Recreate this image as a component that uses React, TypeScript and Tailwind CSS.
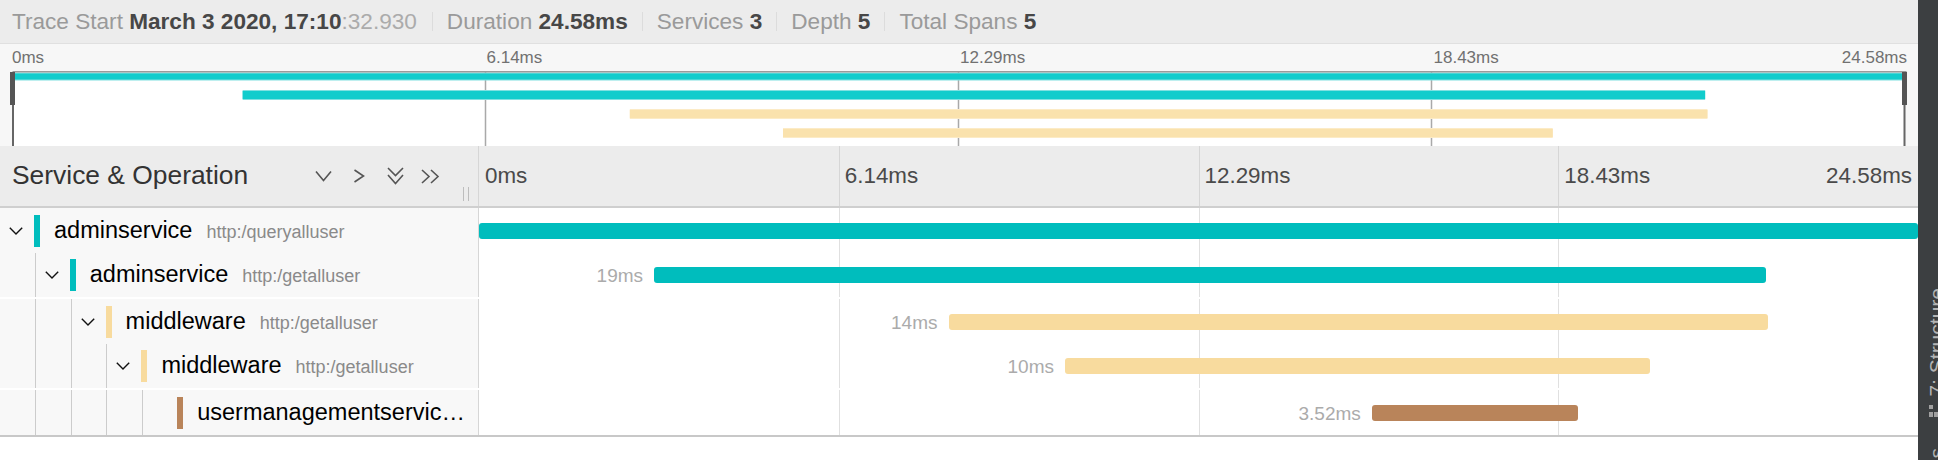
import React from 'react';

const TOTAL = 24.58;

type Span = {
  service: string;
  op?: string;
  depth: number;
  start: number;
  dur: number;
  color: 'teal' | 'tan' | 'brown';
  label?: string;
  hasChildren: boolean;
};

const spans: Span[] = [
  { service: 'adminservice', op: 'http:/queryalluser', depth: 0, start: 0, dur: 24.58, color: 'teal', hasChildren: true },
  { service: 'adminservice', op: 'http:/getalluser', depth: 1, start: 2.99, dur: 19, color: 'teal', label: '19ms', hasChildren: true },
  { service: 'middleware', op: 'http:/getalluser', depth: 2, start: 8.02, dur: 14, color: 'tan', label: '14ms', hasChildren: true },
  { service: 'middleware', op: 'http:/getalluser', depth: 3, start: 10.01, dur: 10, color: 'tan', label: '10ms', hasChildren: true },
  { service: 'usermanagementservic…', depth: 4, start: 15.25, dur: 3.52, color: 'brown', label: '3.52ms', hasChildren: false },
];

const barColor: Record<Span['color'], string> = {
  teal: 'bg-[#00bdbd]',
  tan: 'bg-[#f8db9e]',
  brown: 'bg-[#b9845a]',
};

function HeaderItem({ label, value, first }: { label: string; value: React.ReactNode; first?: boolean }) {
  return (
    <div className={first ? 'pl-[12px] pr-[15px]' : 'px-[14px]'}>
      <span className="text-[#9a9a9a]">{label} </span>
      {value}
    </div>
  );
}

function Divider() {
  return <div className="h-[19px] w-px shrink-0 bg-[#dcdcdc]" />;
}

function Minimap() {
  const W = 1892;
  const ox = 2.5;
  const pxPerMs = W / TOTAL;
  const bars = [
    { s: 0, d: 24.58, y: 1.5, h: 8, c: 'teal' },
    { s: 2.99, d: 19, y: 19, h: 10, c: 'teal' },
    { s: 8.02, d: 14, y: 38, h: 10, c: 'tan' },
    { s: 10.01, d: 10, y: 57, h: 10, c: 'tan' },
  ];
  return (
    <div className="bg-[#f7f7f7]">
      <div className="grid h-[27px] grid-cols-4 items-center px-[12px] pt-[1px] text-[17px] text-[#717171]">
        <div>0ms</div>
        <div className="pl-[1px]">6.14ms</div>
        <div className="pl-[1px]">12.29ms</div>
        <div className="flex justify-between pl-[1px]">
          <span>18.43ms</span>
          <span className="-mr-[1px]">24.58ms</span>
        </div>
      </div>
      <div className="h-[75px] pl-[10px]">
        <svg width="1898" height="75" viewBox="0 0 1898 75">
          <rect x={ox} y={0} width={W} height={75} fill="#ffffff" />
          {[1, 2, 3].map((k) => (
            <rect key={k} x={ox + (W / 4) * k - 0.75} y={0} width={1.5} height={75} fill="#a9a9a9" />
          ))}
          {bars.map((b, i) => (
            <g key={i}>
              <rect x={ox + b.s * pxPerMs} y={b.y} width={b.d * pxPerMs} height={b.h} fill={b.c === 'teal' ? '#7fe0e0' : '#fcebc6'} />
              <rect x={ox + b.s * pxPerMs} y={b.y + 1} width={b.d * pxPerMs} height={b.h - 2} fill={b.c === 'teal' ? '#11cccc' : '#fae2ad'} />
            </g>
          ))}
          <rect x={ox} y={0} width={W + 2} height={1.5} fill="#9a9a9a" />
          <rect x={0} y={1} width={5} height={33} fill="#555555" />
          <rect x={2} y={34} width={2} height={41} fill="#666666" />
          <rect x={1892} y={1} width={5} height={33} fill="#555555" />
          <rect x={1893.5} y={34} width={2} height={41} fill="#666666" />
        </svg>
      </div>
    </div>
  );
}

function ChevDown({ className }: { className?: string }) {
  return (
    <svg width="17" height="12" viewBox="0 0 17 12" className={className}>
      <path d="M1 1.5 L8.5 10.5 L16 1.5" fill="none" stroke="#555" strokeWidth="1.6" />
    </svg>
  );
}

function RowChevron() {
  return (
    <svg width="14" height="8" viewBox="0 0 14 8">
      <path d="M0.8 0.8 L7 7 L13.2 0.8" fill="none" stroke="#111" strokeWidth="1.4" />
    </svg>
  );
}

function TableHeader() {
  return (
    <div className="flex h-[62px] border-b-2 border-[#cfcfcf] bg-[#ececec]">
      <div className="flex w-[479px] shrink-0 items-center border-r border-[#d6d6d6] pl-[12px] pr-[9px]">
        <div className="flex-1 text-[26.4px] text-[#333333]">Service &amp; Operation</div>
        <div className="flex items-center">
          <ChevDown />
          <svg width="12" height="14" viewBox="0 0 12 14" className="ml-[21px]">
            <path d="M1.5 1 L10.5 7 L1.5 13" fill="none" stroke="#555" strokeWidth="1.6" />
          </svg>
          <svg width="17" height="18" viewBox="0 0 17 18" className="ml-[22px]">
            <path d="M1 1 L8.5 8.5 L16 1" fill="none" stroke="#555" strokeWidth="1.6" />
            <path d="M1 8 L8.5 16.5 L16 8" fill="none" stroke="#555" strokeWidth="1.6" />
          </svg>
          <svg width="19" height="15" viewBox="0 0 19 15" className="ml-[17px]">
            <path d="M1 1 L8 7.5 L1 14" fill="none" stroke="#555" strokeWidth="1.6" />
            <path d="M10 1 L17 7.5 L10 14" fill="none" stroke="#555" strokeWidth="1.6" />
          </svg>
        </div>
        <div className="mb-[5px] ml-[23px] h-[14px] w-[6px] self-end border-x border-[#bdbdbd]" />
      </div>
      <div className="grid flex-1 grid-cols-4 text-[22.4px] text-[#4a4a4a]">
        <div className="flex items-center pl-[6px]">0ms</div>
        <div className="flex items-center border-l border-[#d6d6d6] pl-[5px]">6.14ms</div>
        <div className="flex items-center border-l border-[#d6d6d6] pl-[5px]">12.29ms</div>
        <div className="flex items-center justify-between border-l border-[#d6d6d6] pl-[5px] pr-[6px]">
          <span>18.43ms</span>
          <span>24.58ms</span>
        </div>
      </div>
    </div>
  );
}

function Row({ span, index }: { span: Span; index: number }) {
  const indents = Array.from({ length: span.depth });
  return (
    <div className={index % 2 === 1 ? 'flex h-[46px] border-b-2 border-white' : 'flex h-[45px]'}>
      <div className="flex h-full w-[479px] shrink-0 items-center border-r border-[#d6d6d6] bg-[#f8f8f8]">
        {indents.map((_, k) => (
          <div key={k} className="h-full w-[35.8px] shrink-0 border-r border-[#cccccc]" />
        ))}
        <div className="flex w-[34px] shrink-0 items-center pl-[9px]">{span.hasChildren && <RowChevron />}</div>
        <div className={`h-[32px] w-[6px] shrink-0 ${barColor[span.color]}`} />
        <div className="ml-[14px] flex min-w-0 items-baseline whitespace-nowrap">
          <span className="text-[23.5px] text-black">{span.service}</span>
          {span.op && <span className="ml-[14px] text-[18px] text-[#8a8a8a]">{span.op}</span>}
        </div>
      </div>
      <div className="relative flex h-full flex-1 items-center">
        <div className="absolute inset-0 grid grid-cols-4">
          <div />
          <div className="border-l border-[#e0e0e0]" />
          <div className="border-l border-[#e0e0e0]" />
          <div className="border-l border-[#e0e0e0]" />
        </div>
        <div
          className={`relative h-[16px] shrink-0 rounded-[3px] ${barColor[span.color]}`}
          style={{ marginLeft: `${(span.start / TOTAL) * 100}%`, width: `${(span.dur / TOTAL) * 100}%` }}
        >
          {span.label && (
            <span className="absolute right-full top-1/2 mr-[11px] -translate-y-1/2 whitespace-nowrap text-[19px] leading-none text-[#ababab]">
              {span.label}
            </span>
          )}
        </div>
      </div>
    </div>
  );
}

function Sidebar() {
  return (
    <div className="flex h-full w-[20px] shrink-0 flex-col items-start overflow-hidden bg-[#3c3f41] pl-[8px] pt-[288px] text-[#b4b4b4]">
      <div className="rotate-180 whitespace-nowrap text-[21px] leading-[21px] [writing-mode:vertical-rl]">7: Structure</div>
      <svg width="10" height="12" viewBox="0 0 10 12" className="ml-[3px] mt-[8px] shrink-0">
        <rect x="0" y="0" width="4" height="4" fill="#a0a0a0" />
        <rect x="0" y="7" width="4" height="5" fill="#a0a0a0" />
        <rect x="5" y="7" width="4" height="5" fill="#a0a0a0" />
      </svg>
      <div className="mt-[31px] rotate-180 whitespace-nowrap text-[21px] leading-[21px] [writing-mode:vertical-rl]">s</div>
    </div>
  );
}

export default function App() {
  return (
    <div className="flex h-[460px] w-[1938px] overflow-hidden bg-white [font-family:'Liberation_Sans',Arial,sans-serif]">
      <div className="w-[1918px] shrink-0">
        <div className="flex h-[44px] items-center border-b border-[#e0e0e0] bg-[#ececec] text-[22.6px]">
          <HeaderItem
            first
            label="Trace Start"
            value={
              <>
                <b className="text-[#474747]">March 3 2020, 17:10</b>
                <span className="text-[#ababab]">:32.930</span>
              </>
            }
          />
          <Divider />
          <HeaderItem label="Duration" value={<b className="text-[#474747]">24.58ms</b>} />
          <Divider />
          <HeaderItem label="Services" value={<b className="text-[#474747]">3</b>} />
          <Divider />
          <HeaderItem label="Depth" value={<b className="text-[#474747]">5</b>} />
          <Divider />
          <HeaderItem label="Total Spans" value={<b className="text-[#474747]">5</b>} />
        </div>
        <Minimap />
        <TableHeader />
        <div className="border-b-2 border-[#c8c8c8]">
          {spans.map((s, i) => (
            <Row key={i} span={s} index={i} />
          ))}
        </div>
      </div>
      <Sidebar />
    </div>
  );
}
